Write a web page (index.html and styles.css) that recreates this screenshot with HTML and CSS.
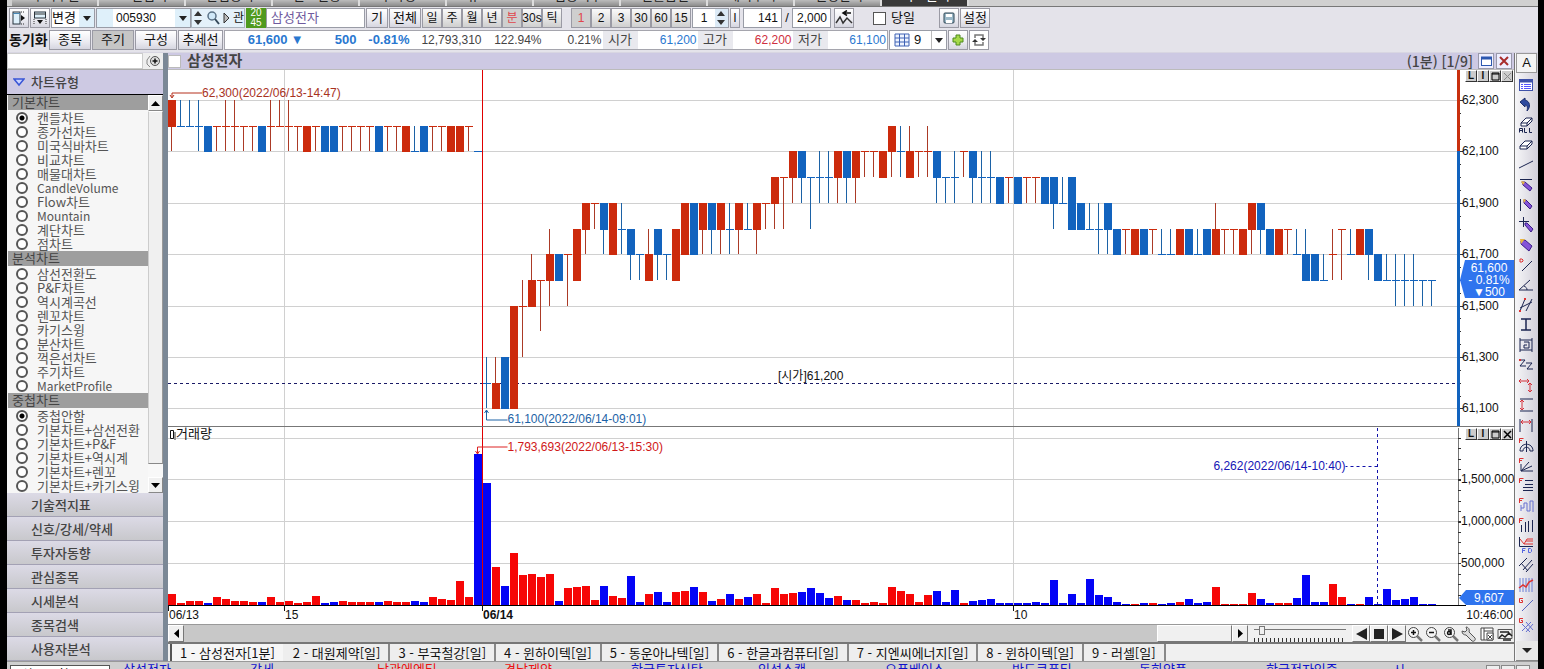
FILE: index.html
```html
<!DOCTYPE html>
<html lang="ko">
<head>
<meta charset="utf-8">
<title>삼성전자 차트</title>
<link rel="stylesheet" href="styles.css">
</head>
<body>
<div class="window">
  <nav class="menu">
    <a href="#">주식주문</a><a href="#">조건검색</a><a href="#">관심종목</a><a href="#">잔고현황</a><a href="#">투자정보</a><a href="#">뉴스</a><a href="#">업종지수</a><a href="#">선물옵션</a><a href="#">해외주식</a><a href="#">설정관리</a><a href="#" class="on">차트분석</a>
  </nav>

  <header class="bars">
    <div class="bar">
      <button class="btn icon" aria-label="왼쪽 패널"><svg width="14" height="14"><rect x="1" y="1" width="7" height="12" fill="#dff1fb" stroke="#27323c"/><path d="M1 2.500h7" stroke="#4a89b5"/><path d="M9 4l4 3-4 3z" fill="#111"/><path d="M9 1h4M9 13h4" stroke="#333" stroke-dasharray="1 1"/></svg></button>
      <button class="btn icon" aria-label="아래 패널"><svg width="14" height="14"><rect x="1.500" y="1" width="11" height="6" fill="#dff1fb" stroke="#27323c"/><path d="M1 3h12" stroke="#333"/><path d="M4 9h6l-3 4z" fill="#111"/><path d="M1 8v5M13 8v5" stroke="#333" stroke-dasharray="1 1"/></svg></button>
      <label class="combo change"><select aria-label="변경"><option>변경</option></select><i class="arrow"></i></label>
      <label class="combo code"><i class="swatch"></i><input value="005930" aria-label="종목코드"><i class="arrow"></i></label>
      <div class="cells">
        <button class="flat" aria-label="증감"><svg width="12" height="18"><path d="M6 2l4 5H2zM6 16l4-5H2z" fill="#333"/></svg></button>
        <button class="flat" aria-label="찾기"><svg width="14" height="16"><circle cx="6" cy="6" r="4" fill="#cfe8f8" stroke="#5a7186" stroke-width="1.500"/><path d="M9 9l4 5" stroke="#35495a" stroke-width="2"/></svg></button>
        <button class="flat" aria-label="다음"><svg width="9" height="14"><path d="M2 2l5 5-5 5z" fill="#bbb" stroke="#333"/></svg></button>
        <button class="flat">관</button>
      </div>
      <span class="badge">20<br>45</span>
      <input class="box name" value="삼성전자" aria-label="종목명">
      <button class="btn w22">기</button><button class="btn w32">전체</button>
      <div class="group">
        <button class="btn">일</button><button class="btn">주</button><button class="btn">월</button><button class="btn">년</button><button class="btn pressed">분</button><button class="btn">30s</button><button class="btn">틱</button>
      </div>
      <div class="group nums">
        <button class="btn pressed">1</button><button class="btn">2</button><button class="btn">3</button><button class="btn">30</button><button class="btn">60</button><button class="btn">15</button>
      </div>
      <label class="combo one"><input value="1" aria-label="주기값"><svg width="13" height="18"><rect width="13" height="18" fill="#dceaf6"/><path d="M6 2l4 5H2zM6 16l4-5H2z" fill="#333"/></svg></label>
      <button class="btn w10">l</button>
      <input class="box num" value="141" aria-label="표시 개수"><span class="slash">/</span><input class="box num" value="2,000" aria-label="전체 개수">
      <button class="btn icon" aria-label="되돌리기"><svg width="18" height="16"><path d="M1 13l4-6 3 6 4-5 5 5" fill="none" stroke="#333" stroke-width="1.500"/><path d="M16 3H9m3-2.500L8 3l4 2.500" fill="none" stroke="#111" stroke-width="1.500"/></svg></button>
      <label class="today"><input type="checkbox"> 당일</label>
      <button class="btn icon save" aria-label="저장"><svg width="14" height="14"><rect x="2" y="2" width="10" height="10" rx="1" fill="#9ab8c8" stroke="#2d4552"/><path d="M4 3h6v3H4zM4 9h6v3H4z" fill="#fff"/></svg></button>
      <button class="btn w30">설정</button>
    </div>
    <div class="bar">
      <b class="sync">동기화</b>
      <button class="btn w41">종목</button><button class="btn w41 pressed dark">주기</button><button class="btn w41">구성</button><button class="btn w44">추세선</button>
      <table class="quote"><tr>
        <td class="q1 down strong">61,600</td><td class="q2 down strong">▼</td><td class="q3 down strong">500</td><td class="q3 down strong">-0.81%</td><td class="q4">12,793,310</td><td class="q5">122.94%</td><td class="q5">0.21%</td>
        <th>시가</th><td class="q5 down">61,200</td><th>고가</th><td class="q5 up">62,200</td><th>저가</th><td class="q5 down">61,100</td>
      </tr></table>
      <label class="combo nine"><svg width="24" height="18"><path d="M5 3h14v12H5zM5 7h14M5 11h14M9.500 3v12M14.500 3v12" fill="#eef4ff" stroke="#3f62b5"/></svg><select aria-label="화면 수"><option>9</option></select><i class="arrow plain"></i></label>
      <button class="btn icon" aria-label="추가"><svg width="14" height="14"><path d="M5 2h4v3h3v4H9v3H5V9H2V5h3z" fill="#a5d94a" stroke="#4d8a1d"/></svg></button>
      <button class="btn icon white" aria-label="새로고침"><svg width="16" height="16"><path d="M4 6V3h8v3M12 10v3H4v-3" fill="none" stroke="#777" stroke-width="1.500"/><path d="M9 6h6l-3 3zM1 10h6L4 7z" fill="#333"/></svg></button>
    </div>
  </header>

  <main class="main">
    <aside class="side">
      <div class="find"><input aria-label="차트 검색"><button aria-label="검색"><svg width="17" height="14"><path d="M5 2L2 6v4l3 3" fill="none" stroke="#888"/><circle cx="10" cy="7" r="4.500" fill="#ddd" stroke="#555"/><path d="M7.500 7h5M10 4.500v5" stroke="#111" stroke-width="1.500"/></svg></button></div>
      <button class="section"><svg width="12" height="10"><path d="M1 2h10L6 8z" fill="#c9d3ff" stroke="#3a56d6" stroke-width="1.500"/></svg>차트유형</button>
      <div class="scroller">
        <div class="list">
          <h3>기본차트</h3>
          <label><input type="radio" name="type" checked>캔들차트</label>
          <label><input type="radio" name="type">종가선차트</label>
          <label><input type="radio" name="type">미국식바차트</label>
          <label><input type="radio" name="type">비교차트</label>
          <label><input type="radio" name="type">매물대차트</label>
          <label class="latin"><input type="radio" name="type">CandleVolume</label>
          <label><input type="radio" name="type">Flow차트</label>
          <label class="latin"><input type="radio" name="type">Mountain</label>
          <label><input type="radio" name="type">계단차트</label>
          <label><input type="radio" name="type">점차트</label>
          <h3>분석차트</h3>
          <label><input type="radio" name="type">삼선전환도</label>
          <label><input type="radio" name="type">P&amp;F차트</label>
          <label><input type="radio" name="type">역시계곡선</label>
          <label><input type="radio" name="type">렌꼬차트</label>
          <label><input type="radio" name="type">카기스윙</label>
          <label><input type="radio" name="type">분산차트</label>
          <label><input type="radio" name="type">꺽은선차트</label>
          <label><input type="radio" name="type">주기차트</label>
          <label class="latin"><input type="radio" name="type">MarketProfile</label>
          <h3>중첩차트</h3>
          <label><input type="radio" name="over" checked>중첩안함</label>
          <label><input type="radio" name="over">기본차트+삼선전환</label>
          <label><input type="radio" name="over">기본차트+P&amp;F</label>
          <label><input type="radio" name="over">기본차트+역시계</label>
          <label><input type="radio" name="over">기본차트+렌꼬</label>
          <label><input type="radio" name="over">기본차트+카기스윙</label>
        </div>
        <div class="vbar"><button aria-label="위로"><svg width="9" height="5"><path d="M4.500 0L9 5H0z"/></svg></button><div class="thumb"></div><button aria-label="아래로"><svg width="9" height="5"><path d="M0 0h9L4.500 5z"/></svg></button></div>
      </div>
      <button class="fold">기술적지표</button><button class="fold">신호/강세/약세</button><button class="fold">투자자동향</button><button class="fold">관심종목</button><button class="fold">시세분석</button><button class="fold">종목검색</button><button class="fold">사용자분석</button>
    </aside>

    <section class="work">
      <div class="title">
        <input type="checkbox" aria-label="선택"><h2>삼성전자</h2><span>(1분) [1/9]</span>
        <button aria-label="이전 크기로"><svg width="13" height="13"><rect x="1.500" y="2.500" width="10" height="8" fill="#fff" stroke="#2c57b0"/><path d="M1 3h11" stroke="#2c57b0" stroke-width="3"/></svg></button>
        <button aria-label="닫기"><svg width="13" height="13"><path d="M2 2l8 8M10 2l-8 8" stroke="#a82c2c" stroke-width="2"/></svg></button>
      </div>
      <div class="canvas">
        <svg id="chart"></svg>
        <div class="pane-tools top"><button>L</button><button>I</button><button><svg width="9" height="9"><path d="M1 1h7v7H1zM1 2h7" fill="none" stroke="#000"/></svg></button><button class="off"><svg width="9" height="9"><path d="M1 1l7 7M8 1L1 8" stroke="#888"/></svg></button></div>
        <div class="pane-tools low"><button>L</button><button>I</button><button><svg width="9" height="9"><path d="M1 1h7v7H1zM1 2h7" fill="none" stroke="#000"/></svg></button><button><svg width="9" height="9"><path d="M1 1l7 7M8 1L1 8" stroke="#000" stroke-width="1.500"/></svg></button></div>
      </div>
      <div class="hbar">
        <button aria-label="왼쪽"><svg width="5" height="9"><path d="M5 0v9L0 4.500z"/></svg></button>
        <div class="track"><div class="knob"></div></div>
        <button aria-label="오른쪽"><svg width="5" height="9"><path d="M0 0v9l5-4.500z"/></svg></button>
        <div class="speed"><input type="range" min="0" max="100" value="6" aria-label="속도"><i></i></div>
        <button class="play" aria-label="뒤로"><svg width="11" height="12"><path d="M11 0v12L0 6z" fill="#222"/></svg></button>
        <button class="play" aria-label="정지"><svg width="10" height="10"><path d="M0 0h10v10H0z" fill="#222"/></svg></button>
        <button class="play" aria-label="재생"><svg width="11" height="12"><path d="M0 0v12l11-6z" fill="#222"/></svg></button>
        <button class="tool" aria-label="확대"><svg width="16" height="16"><circle cx="6.500" cy="6.500" r="5" fill="#f6f6f6" stroke="#444"/><path d="M4 6.500h5M6.500 4v5" stroke="#111" stroke-width="1.500"/><path d="M10 10l5 5" stroke="#777" stroke-width="2.500"/></svg></button>
        <button class="tool" aria-label="축소"><svg width="16" height="16"><circle cx="6.500" cy="6.500" r="5" fill="#f6f6f6" stroke="#444"/><path d="M4 6.500h5" stroke="#111" stroke-width="1.500"/><path d="M10 10l5 5" stroke="#777" stroke-width="2.500"/></svg></button>
        <button class="tool" aria-label="전체 보기"><svg width="16" height="16"><circle cx="6.500" cy="6.500" r="5" fill="#f6f6f6" stroke="#444"/><circle cx="6" cy="7" r="1.500" fill="none" stroke="#111" stroke-width="1.500"/><path d="M5 4h3v5" fill="none" stroke="#111" stroke-width="1.500"/><path d="M10 10l5 5" stroke="#777" stroke-width="2.500"/></svg></button>
        <button class="tool" aria-label="도구"><svg width="16" height="16"><path d="M5 1l1 3-2 2-3-1c0 3 2 4 4 4l6 6c2 1 4-1 3-3L8 6c1-3-1-5-3-5z" fill="#ddd" stroke="#555"/></svg></button>
        <button class="tool" aria-label="차트 저장"><svg width="16" height="16"><path d="M2 2h12v12H2zM5 2v12M5 5h9" fill="#fff" stroke="#444"/><path d="M8 7h6v7H8zM9 9l4 4M13 9l-4 4" fill="#fff" stroke="#444"/></svg></button>
        <button class="tool" aria-label="차트 설정"><svg width="16" height="16"><path d="M1 3.500h14v9H1z" fill="#eee" stroke="#555"/><path d="M3 6h9M2 12l3-3 3 2 4-4 3 3M6 14h8" fill="none" stroke="#222" stroke-width="1.500"/></svg></button>
      </div>
      <div class="tabs">
        <button class="on">1 - 삼성전자[1분]</button><button>2 - 대원제약[일]</button><button>3 - 부국철강[일]</button><button>4 - 윈하이텍[일]</button><button>5 - 동운아나텍[일]</button><button>6 - 한글과컴퓨터[일]</button><button>7 - 지엔씨에너지[일]</button><button>8 - 윈하이텍[일]</button><button>9 - 러셀[일]</button>
      </div>
    </section>

    <div class="rail">
      <button class="font">A</button>
      <div class="tools">
        <button aria-label="목록"><svg width="16" height="16"><rect x="1.500" y="2.500" width="13" height="11" fill="#fff" stroke="#3d51a8"/><path d="M1 4h14" stroke="#3d51a8" stroke-width="3"/><path d="M3 7.500h2M6 7.500h7M3 9.500h2M6 9.500h7M3 11.500h2M6 11.500h7" stroke="#55f"/></svg></button>
        <button aria-label="실행 취소"><svg width="16" height="16"><path d="M2 5l5-4v2c5 1 6 7 2 11 1-4 0-6-2-6v2z" fill="#2e4a9e" stroke="#1b2d6b"/></svg></button>
        <button aria-label="모두 지우기"><svg width="16" height="16"><path d="M3 6l5-5h6l-5 5zM3 6v3h6V6M9 9l5-5V1" fill="#fff" stroke="#1b2550"/><path d="M1.500 15.500v-4h3v4M1.500 13.500h3M6.500 11v4.500H9M11.500 11v4.500H14" fill="none" stroke="#1b2550"/></svg></button>
        <button aria-label="지우개"><svg width="16" height="16"><path d="M2 9l5-5h7l-5 5zM2 9v3h7V9M9 12l5-5V4" fill="#fff" stroke="#1b2550"/></svg></button>
        <button aria-label="추세선"><svg width="16" height="16"><path d="M1 11l14-7" stroke="#1b2550"/></svg></button>
        <button aria-label="수평선"><svg width="16" height="16"><path d="M2 2.500h12" stroke="#1b2550"/><path d="M4 5l3 0 7 6-2 3-7-6z" fill="#8554d8" stroke="#3b1d86"/><path d="M3 4l4 1-2 3z" fill="#e8b640"/></svg></button>
        <button aria-label="수직선"><svg width="16" height="16"><path d="M2.500 2v12" stroke="#1b2550"/><path d="M6 3l2 0 6 6-2 3-6-6z" fill="#8554d8" stroke="#3b1d86"/><path d="M5 2l3 1-2 3z" fill="#e8b640"/></svg></button>
        <button aria-label="십자선"><svg width="16" height="16"><path d="M1 4.500h10M5.500 0v10" stroke="#1b2550"/><path d="M7 6l2 0 6 6-2 3-6-7z" fill="#8554d8" stroke="#3b1d86"/></svg></button>
        <button aria-label="펜"><svg width="16" height="16"><path d="M3 4l4-1 7 6-3 5-8-7z" fill="#8554d8" stroke="#3b1d86"/><path d="M2 2h5L3 7z" fill="#e8b640"/></svg></button>
        <button aria-label="거리선"><svg width="16" height="16"><path d="M4 14L14 4" stroke="#1b2550"/><path d="M2 2h2l1 1v1l-1 1H2z" fill="none" stroke="#d33"/></svg></button>
        <button aria-label="각도선"><svg width="16" height="16"><path d="M15 13H1L12 3M6 9c2 1 3 2 3 4" fill="none" stroke="#1b2550"/></svg></button>
        <button aria-label="평행선"><svg width="16" height="16"><path d="M2 14L7 2M8 14l6-12M2 11L14 5" stroke="#1b2550"/><path d="M1 13h2v2H1zM6 1h2v2H6z" fill="#d33"/></svg></button>
        <button aria-label="구간"><svg width="16" height="16"><path d="M3 2h10M3 13h10M8 2v11" stroke="#1b2550" stroke-width="1.500"/></svg></button>
        <button aria-label="사각형"><svg width="16" height="16"><path d="M2 1v14M14 1v14M2 3h12M2 13h12M6 5h5v6H6V8h3" fill="none" stroke="#1b2550"/></svg></button>
        <button aria-label="지그재그"><svg width="16" height="16"><path d="M1 3h6l-5 6h6M8 6h6l-5 6h6" fill="none" stroke="#1b2550"/><path d="M1 2h2v2H1z" fill="#d33"/></svg></button>
        <button aria-label="가로세로"><svg width="16" height="16"><path d="M1 4h10M3 2L1 4l2 2M9 2l2 2-2 2M12 6v9M10 8l2-2 2 2M10 13l2 2 2-2" fill="none" stroke="#d5303a"/></svg></button>
        <button aria-label="세로 구간"><svg width="16" height="16"><path d="M2 2h13M2 14h13" stroke="#1b2550"/><path d="M4 3v10M2 5l2-2 2 2M2 11l2 2 2-2" fill="none" stroke="#d5303a"/></svg></button>
        <button aria-label="가로 구간"><svg width="16" height="16"><path d="M2 2v13M14 2v13" stroke="#1b2550"/><path d="M3 5h10M5 3L3 5l2 2M11 3l2 2-2 2" fill="none" stroke="#d5303a"/></svg></button>
        <button aria-label="피보나치 원"><svg width="16" height="16"><path d="M2 14c0-9 13-9 13 0M5 14c0-5 7-5 7 0M8.500 4v11M2 14h3M12 14h3" fill="none" stroke="#1b2550"/><path d="M1.500 6V1.500h4M1 3.500h3" fill="none" stroke="#d33"/></svg></button>
        <button aria-label="피보나치 팬"><svg width="16" height="16"><path d="M3 7v7h12M3 14L14 9M3 14l8-9" fill="none" stroke="#1b2550"/><path d="M1.500 6V1.500h4M1 3.500h3" fill="none" stroke="#d33"/></svg></button>
        <button aria-label="피보나치 되돌림"><svg width="16" height="16"><path d="M7 3.500h8M7 7.500h8M5 10.500h10M5 13.500h10" stroke="#1b2550"/><path d="M1.500 6V1.500h4M1 3.500h3" fill="none" stroke="#d33"/></svg></button>
        <button aria-label="피보나치 목표"><svg width="16" height="16"><path d="M3 8v6M3 11h3V6h3v8h3V4h3v11" fill="none" stroke="#6670d0"/><path d="M1.500 6V1.500h4M1 3.500h3" fill="none" stroke="#d33"/></svg></button>
        <button aria-label="피보나치 시간"><svg width="16" height="16"><path d="M3.500 8v7M7.500 5v10M10.500 4v11M14.500 3v12" stroke="#1b2550"/><path d="M1.500 6V1.500h4M1 3.500h3" fill="none" stroke="#d33"/></svg></button>
        <button aria-label="밴드"><svg width="16" height="16"><path d="M1.500 0v9.500H15" fill="none" stroke="#1b2550"/><path d="M2 2l4 5 3-5h6M6 7h9M8 4h7" fill="none" stroke="#d33"/><path d="M4.500 16v-4.500h3M4 13.500h3M10.500 11.500h2l1 1v2l-1 1h-2z" fill="none" stroke="#5566e0"/></svg></button>
        <button aria-label="채널"><svg width="16" height="16"><path d="M1 9L9 1M5 13l9-10M8 15l7-8M3 6l7 8" stroke="#1b2550"/></svg></button>
        <button aria-label="회귀"><svg width="16" height="16"><path d="M2 1v14M5 1v14M8 1v14M11 1v14M14 1v14" stroke="#6b7fd6"/><path d="M1 11l4-3 3 2 3-5 4-2" fill="none" stroke="#d33" stroke-width="1.500"/></svg></button>
        <button aria-label="간선"><svg width="16" height="16"><path d="M4 14L15 3" stroke="#5566c0"/><path d="M5 1.500H1.500v4h3V3.500H3" fill="none" stroke="#d33"/></svg></button>
        <button aria-label="간격자"><svg width="16" height="16"><path d="M4 7l8 8M8 5l7 8M4 14L13 5M8 15l7-8" stroke="#6670d0"/><path d="M5 1.500H1.500v4h3V3.500H3" fill="none" stroke="#d33"/></svg></button>
      </div>
      <button class="more" aria-label="더보기"><svg width="10" height="5"><path d="M0 0h10L5 5z" fill="#222"/></svg></button>
    </div>
  </main>

  <footer class="ticker">
    <select aria-label="관심종목"><option>최근조회</option></select>
    <a href="#">삼성전자</a><a href="#">강세</a><a href="#" class="up">남광에엔티</a><a href="#" class="up">경남제약</a><a href="#">한국투자신탁</a><a href="#">인성스캔</a><a href="#">오픈베이스</a><a href="#">반도큐폰티</a><a href="#">동화약품</a><a href="#">한국전자인증</a><a href="#">시</a>
    <div class="pager"><button aria-label="목록"></button><button aria-label="이전"></button><button aria-label="다음"></button></div>
  </footer>
</div>
<script src="chart.js"></script>
</body>
</html>
```
FILE: styles.css
```css
* { box-sizing: border-box; }
body {
  margin: 0;
  height: 100vh;
  padding: 0 6px 0 7px;
  background: #000;
  font-family: "Liberation Sans", "Noto Sans CJK KR", sans-serif;
  font-size: 13px;
  line-height: 16px;
  color: #111;
  overflow: hidden;
}
button, input, select { font: inherit; color: inherit; margin: 0; padding: 0; border: 0; border-radius: 0; }
button { background: none; display: flex; align-items: center; justify-content: center; white-space: nowrap; flex: none; }
input { min-width: 0; outline: 0; background: #fff; }
svg { display: block; flex: none; }
select { appearance: none; background: #fff; }
a { text-decoration: none; color: inherit; }

.window { height: 100%; display: flex; flex-direction: column; background: #e4e3ea; }

.menu { height: 7px; flex: none; display: flex; align-items: flex-end; overflow: hidden; background: #d0d0d0; border-bottom: 1px solid #777; padding-left: 5px; }
.menu a { width: 87px; flex: none; height: 20px; line-height: 20px; padding-left: 20px; background: linear-gradient(#ccc 60%, #8c8c8c); border-right: 2px solid #ddd; color: #222; }
.menu a.on { background: #3a3a3a; color: #fff; }

.bars { flex: none; padding: 1px 2px 2px 2px; display: flex; flex-direction: column; gap: 2px; }
.bar { height: 20px; display: flex; align-items: stretch; gap: 1px; white-space: nowrap; }
.btn { border: 1px solid #9a9aa4; background: linear-gradient(#fff, #ebebf1 60%, #d6d6e0); }
.btn.icon { width: 20px; }
.btn.white { background: #fff; }
.btn.pressed { background: #cfcfcf; color: #e0444c; }
.btn.dark { color: #111; background: #c6c6c6; }
.w10 { width: 10px; } .w22 { width: 22px; } .w30 { width: 30px; } .w32 { width: 32px; } .w41 { width: 42px; } .w44 { width: 45px; }
.group { display: flex; margin-right: 8px; }
.group .btn { width: 20px; background: linear-gradient(#fafafa, #e2e2e2 60%, #cfcfcf); font-size: 12px; }
.group .btn.pressed { background: #cfcfcf; }
.group.nums { margin-right: 0; }
.combo { display: flex; align-items: stretch; border: 1px solid #999ca6; background: #fff; }
.combo input, .combo select { flex: 1; min-width: 0; }
.combo input, .box { font-size: 12px; }
.arrow { width: 15px; flex: none; background: #dff0fa; display: flex; align-items: center; justify-content: center; }
.arrow::after { content: ""; border: 4px solid transparent; border-top: 5px solid #222; border-bottom: 0; }
.arrow.plain { background: #fff; border-left: 1px solid #bbb; }
.change { width: 44px; }
.code { width: 95px; }
.code .swatch { width: 16px; background: #dff0fa; }
.code input { padding-left: 3px; }
.cells { display: flex; justify-content: space-between; width: 54px; background: #e4f1fa; border: 1px solid #aab4be; margin-left: -1px; }
.flat { font-size: 12px; }
.badge { width: 20px; background: #4f9a1e; color: #fff; font-size: 10px; line-height: 10px; text-align: center; }
.box.name { width: 99px; padding-left: 4px; color: #6f5a9e; margin-left: -1px; font-size: 13px; }
.box { border: 1px solid #999ca6; }
.one { width: 37px; }
.one input { text-align: center; width: 20px; }
.num { width: 39px; padding: 0 3px; text-align: right; margin-left: 2px; }
.slash { width: 8px; text-align: center; line-height: 20px; }
.slash + .num { margin-left: 0; margin-right: 2px; }
.today { display: flex; align-items: center; gap: 5px; margin: 0 23px 0 18px; }
.today input, .title input { appearance: none; width: 13px; height: 13px; background: #fff; border: 1px solid #555; }
.sync { font-weight: 700; width: 39px; line-height: 20px; font-size: 14px; }
.quote { border-collapse: collapse; background: #fff; border: 1px solid #a5a5ad; width: 662px; table-layout: fixed; color: #444; font-size: 12px; }
.quote td, .quote th { padding: 0 1px; text-align: right; font-weight: 400; }
.quote th { width: 35px; background: #e9e9ee; text-align: center; font-size: 13px; }
.q1 { width: 64px; } .q2 { width: 16px; } .q3 { width: 53px; } .q4 { width: 72px; } .q5 { width: 60px; }
.quote .down { color: #2a78d0; }
.quote .up { color: #cf3040; }
.quote .strong { font-weight: 700; font-size: 13px; }
.nine { width: 58px; }

.main { flex: 1; min-height: 0; display: flex; border-top: 1px solid #d8d6e2; }
.side { width: 161px; flex: none; display: flex; flex-direction: column; border-right: 5px solid #7b8896; background: #f6f6f6; font-family: "Noto Sans CJK KR", sans-serif; font-size: 13px; }
.find { height: 16px; flex: none; display: flex; background: #fff; }
.find input { flex: 1; border: 1px solid #ccc; }
.find button { width: 20px; background: #eee; }
.section { height: 26px; justify-content: flex-start; gap: 6px; padding-left: 6px; background: #cdc9e3; border-top: 1px solid #aaa; border-bottom: 1px solid #000; color: #444; font-weight: 500; }
.scroller { flex: 1; min-height: 0; display: flex; }
.list { flex: 1; min-width: 0; overflow: hidden; padding-left: 1px; color: #555; }
.list h3 { margin: 0 0 1px; height: 15px; line-height: 14px; padding-left: 4px; font-size: 13px; font-weight: 400; background: #9e9e9e; color: #444; }
.list label { display: flex; align-items: center; height: 14px; line-height: 14px; gap: 9px; padding-left: 8px; white-space: nowrap; }
.list .latin { font-size: 12px; }
.list input { appearance: none; width: 12px; height: 12px; flex: none; border: 2px solid #555; border-radius: 50%; }
.list input:checked { background: radial-gradient(#000 0 2px, #fff 3px); }
.vbar { width: 15px; display: flex; flex-direction: column; background: #f8f8f8; }
.vbar button { height: 16px; background: #f0f0f0; border: 1px solid; border-color: #fff #888 #888 #fff; }
.thumb { flex: 1; margin-bottom: 13px; background: #f0f0f0; border: 1px solid; border-color: #fff #999 #888 #ccc; }
.fold { height: 24px; justify-content: flex-start; padding-left: 24px; background: linear-gradient(#dcdae6, #c8c8cc); border-bottom: 1px solid #a3a1b4; color: #444; font-weight: 500; }

.work { flex: 1; min-width: 0; display: flex; flex-direction: column; background: #f0f0f0; border-right: 1px solid #777; }
.title { height: 17px; flex: none; display: flex; align-items: center; gap: 2px; background: #cdc9e3; border-bottom: 1px solid #bbb; padding-right: 2px; color: #444; }
.title input { border-color: #bbb; }
.title h2 { margin: 0; padding-left: 4px; font-size: 15px; font-weight: 700; flex: 1; line-height: 16px; }
.title span { font-family: "Noto Sans CJK KR", sans-serif; font-size: 14px; font-weight: 500; margin-right: 3px; }
.title button { width: 16px; height: 16px; background: #eef; border: 1px solid #99a; }
.canvas { flex: 1; min-height: 0; position: relative; background: #fff; }
#chart { width: 100%; height: 100%; position: absolute; inset: 0; font-size: 12px; }
.bold { font-weight: 700; }
.label { font-size: 13px; }
.pane-tools { position: absolute; right: 1px; display: flex; }
.pane-tools.top { top: 0; }
.pane-tools.low { top: 358px; }
.pane-tools button { width: 12px; height: 12px; background: #ccc; border: 1px solid; border-color: #fff #333 #333 #fff; font-size: 10px; font-weight: 700; line-height: 10px; }
.hbar { height: 18px; flex: none; display: flex; border-top: 1px solid #999; align-items: stretch; }
.hbar button { width: 16px; border: 1px solid; border-color: #fff #777 #777 #fff; background: #f0f0f0; }
.track { flex: 1; background: #c8c8c8; display: flex; justify-content: flex-end; }
.knob { width: 75px; background: #f0f0f0; border: 1px solid; border-color: #fff #777 #777 #fff; }
.speed { width: 104px; padding: 1px 6px 0; display: flex; flex-direction: column; justify-content: space-between; }
.speed input { appearance: none; width: 100%; height: 9px; background: linear-gradient(#777, #777) 0 3px / 100% 1px no-repeat; }
.speed input::-webkit-slider-thumb { appearance: none; width: 6px; height: 9px; background: #f0f0f0; border: 1px solid #777; }
.speed i { height: 4px; background: repeating-linear-gradient(90deg, #333 0 1px, transparent 1px 4px); }
.hbar .play { width: 18px; }
.hbar .tool { width: 18px; border-color: transparent; }
.tabs { height: 19px; flex: none; display: flex; border-top: 2px solid #777; padding-left: 2px; }
.tabs button { padding: 0 8px; border-right: 2px solid #888; background: #eee; font-family: "Noto Sans CJK KR", sans-serif; }
.tabs .on { border-left: 2px solid #555; border-right-color: #eee; background: #f6f6f6; }

.rail { width: 23px; flex: none; display: flex; flex-direction: column; padding-left: 1px; background: linear-gradient(90deg, #f6f6f8, #d2d0da); overflow: hidden; }
.rail button { height: 20px; }
.tools { flex: 1; min-height: 0; padding-top: 2px; overflow: hidden; }
.tools button { width: 20px; }
.rail .font { background: #f4f4f4; border: 1px solid #999; width: 21px; }
.rail .more { background: #e8e8e8; border-bottom: 1px solid #888; }

.ticker { height: 8px; flex: none; display: flex; overflow: hidden; background: #cfcfcf; border-top: 1px solid #999; padding-left: 3px; color: #11c; line-height: 14px; }
.ticker select { width: 100px; height: 20px; border: 1px solid #555; color: #111; padding-left: 10px; margin: 3px 13px 0 0; flex: none; }
.ticker a { width: 127px; flex: none; padding-top: 1px; }
.ticker a:last-of-type { width: 20px; }
.ticker .up { color: #e11; }
.pager { margin: 3px 8px 0 auto; display: flex; gap: 1px; }
.pager button { width: 14px; height: 14px; border: 1px solid #888; background: #eee; }
```
FILE: chart.js
```js
// One candle per entry: colour, body top, body bottom, high, low.
// Levels count down from 62,300 in steps of 100 won (a=10, b=11, c=12).
const candles = `r0102 b1101 b1101 b1102 b1212 r1112 r1102 r1102 r1112 r1112 b1212 r1102 r1101 r1102 r1112 r1212
r1112 b1212 b1212 r1112 r1112 r1112 r1112 b1212 r1112 r1112 r1212 b2212 b1212 r1112 r1112 r1212 r1212 r1112 b2222
bbbac rbcac bacac r8c8c r887a r7868 r7779 r6758 b6767 r6668 r5757 r4546 r4445 b4546 r4646 b5546 b5657 b6667 r6757
b5657 b6667 r5757 r4646 b4646 r4546 b4546 r4546 b5546 r4546 b5545 r4546 r4445 r3435 r3335 r2324 b2324 b3335 b3324
b3324 r2324 b2324 r2324 r2223 r2223 r2323 r1213 b2213 r2313 r2223 r2213 b2324 b3334 b3324 r2223 b2324 b3324 b3324
b3434 r3334 b3434 r3334 r3334 b3434 b3435 b4434 b3535 b4545 b5545 b5546 b4546 b5656 r5556 r5656 b5656 r5556 b6656
b6656 r5656 b5656 b6656 b5656 r5646 r5556 r5556 r5656 r4546 b4546 b5656 r5656 r5556 b6656 b6757 b6767 b7767 r6657
r5557 b6656 r5656 b5657 b6767 b7767 b7768 b7768 b7768 b7778 b7778`.split(/\s+/);

const volumes = `r11 r2 r4 r4 b2 r8 r6 r4 r4 r3 b3 r8 r3 r4 r2 r3 r9 b2 b3 r4 r3 r3 r3 b3 r4 r3 r3 b4 b3 r8 r6 r5 r24 r8
b151 b122 r38 b19 r52 r30 r31 r28 r31 b4 r17 r18 r19 r5 b19 r9 r7 b29 b3 r11 b13 b3 r13 r14 b18 r13 b4 r6 b11 r6 b8
r11 r2 r17 r11 r12 b13 b17 b12 b7 r9 b5 r5 r2 r3 r2 r18 r14 r11 r3 r10 b14 b3 b15 r2 b4 b5 b6 b2 b2 b2 b2 b3 b2 b25
b2 b11 b2 b26 b10 b8 b3 b1 r1 b2 r2 b1 b2 r3 b6 b2 b3 r18 r1 r1 r1 r12 b6 b2 r2 r2 b7 b30 b3 b3 r21 r8 b1 r1 b8 b1
b16 b5 b6 b8 b1 b1`.split(/\s+/);

const svg = document.getElementById('chart');

function draw() {
  const W = svg.clientWidth, H = svg.clientHeight;
  const axis = W - 56;
  const pitch = (axis - 21) / 141;
  const k = H / 554;
  const X = n => Math.round(3 + n * pitch);
  const Y = v => Math.round(v * k);
  const L = l => Y(30 + l * 25.7);
  const base = Y(535);
  const out = [];
  const rect = (x, y, w, h, f) => out.push(`<rect x="${x}" y="${y}" width="${w}" height="${h}" fill="${f}"/>`);
  const text = (x, y, t, f, extra = '') => out.push(`<text x="${x}" y="${y}" fill="${f}" ${extra}>${t}</text>`);
  const path = (d, s, extra = '') => out.push(`<path d="${d}" fill="none" stroke="${s}" ${extra}/>`);

  for (let l = 0; l <= 12; l += 2) rect(0, L(l), axis, 1, '#d0d0d0');
  for (const y of [368, 409, 451, 493]) rect(0, Y(y), axis, 1, '#d0d0d0');
  const x15 = X(12.6), x14 = X(34.5), x10 = X(93.6);
  rect(x15, 0, 1, base, '#d0d0d0');
  rect(x10, 0, 1, base, '#d0d0d0');
  path(`M0 ${L(11) + .5}H${axis}`, '#1a1a66', 'stroke-dasharray="3 3"');

  candles.forEach((c, i) => {
    const [top, bottom, high, low] = [...c.slice(1)].map(s => parseInt(s, 16));
    const red = c[0] === 'r', x = X(i);
    rect(x, L(high), 1, L(low) - L(high), red ? '#ab3a26' : '#1c62a6');
    rect(x - 3, L(top), 8, L(bottom) - L(top) + 1, red ? '#cc2a0c' : '#1263be');
  });
  volumes.forEach((v, i) => {
    const h = Y(+v.slice(1));
    rect(X(i) - 3, base - h, 8, h, v[0] === 'r' ? '#f60606' : '#0404f6');
  });

  rect(x14, 0, 1, base, '#e00000');
  rect(0, Y(356), W, 1, '#777');
  rect(0, base, axis + 8, 1, '#000');

  rect(axis, Y(358), 1, base - Y(358), '#777');
  rect(axis - 1, 0, 3, L(2), '#c8300f');
  rect(axis - 1, L(2), 3, Y(356) - L(2), '#1263be');
  for (let l = 0; l <= 12; l += .5) rect(axis + 2, L(l), l % 2 ? 1 : 3, 1, '#333');
  for (let v = 368; v < 530; v += 10.45) rect(axis, Y(v), 3, 1, '#333');
  ['62,300', '62,100', '61,900', '61,700', '61,500', '61,300', '61,100'].forEach((t, i) => text(axis + 4, L(i * 2) + 4, t, '#111'));
  [['1,500,000', 409], ['1,000,000', 451], ['500,000', 493]].forEach(([t, y]) => {
    rect(axis, Y(y), 3, 1, '#333');
    text(axis + 3, Y(y) + 4, t, '#111');
  });

  path(`M4 ${L(0) - 3}v-4h30M2 ${L(0) - 5}l2 3l2 -3`, '#b5301c');
  text(34, L(0) - 3, '62,300(2022/06/13-14:47)', '#a8321e');
  const xl = X(35) + .5;
  path(`M${xl} ${L(12) + 2}v10h21M${xl - 2} ${L(12) + 5}l2 -3l2 3`, '#1c62a6');
  text(xl + 21, L(12) + 15, '61,100(2022/06/14-09:01)', '#1c62a6');
  text(Math.round(axis * .473), L(11) - 3, '[시가]61,200', '#111');
  const xv = X(34) + .5;
  path(`M${xv} ${Y(384)}v-7h30M${xv - 2} ${Y(381)}l2 3l2 -3`, '#d22');
  text(xv + 30, Y(377) + 4, '1,793,693(2022/06/13-15:30)', '#d01818');
  const xc = X(134) + .5;
  path(`M${xc} ${Y(358)}V${base}M${xc} ${Y(396) + .5}h-32`, '#1111aa', 'stroke-dasharray="3 3"');
  text(xc - 32, Y(396) + 4, '6,262(2022/06/14-10:40)', '#1515b5', 'text-anchor="end"');

  path(`M2.500 ${Y(360) + .5}h3v8h-3z`, '#111');
  rect(6, Y(362), 2, 8, '#999');
  text(8, Y(368), '거래량', '#111', 'class="label"');

  out.push(`<path d="M${axis + 2} ${L(7)}l5 -20H${W}v38H${axis + 7}z" fill="#2f74ee"/>`);
  const mid = axis + 31;
  text(mid, L(7) - 8, '61,600', '#fff', 'text-anchor="middle"');
  text(mid, L(7) + 4, '- 0.81%', '#fff', 'text-anchor="middle"');
  text(mid, L(7) + 16, '▼500', '#fff', 'text-anchor="middle"');
  out.push(`<path d="M${axis + 1} ${base - 7}l7 -8H${W}v15H${axis + 8}z" fill="#2f74ee"/>`);
  text(mid, base - 3, '9,607', '#fff', 'text-anchor="middle"');

  const ty = base + 14;
  for (const x of [0, x15, x14, x10]) rect(x, base, 1, 6, '#111');
  text(1, ty, '06/13', '#111');
  text(x15 + 1, ty, '15', '#111');
  text(x14 + 1, ty, '06/14', '#111', 'class="bold"');
  text(x10 + 1, ty, '10', '#111');
  text(W - 1, ty, '10:46:00', '#111', 'text-anchor="end"');
  svg.innerHTML = out.join('');
}

draw();
addEventListener('resize', draw);
```
